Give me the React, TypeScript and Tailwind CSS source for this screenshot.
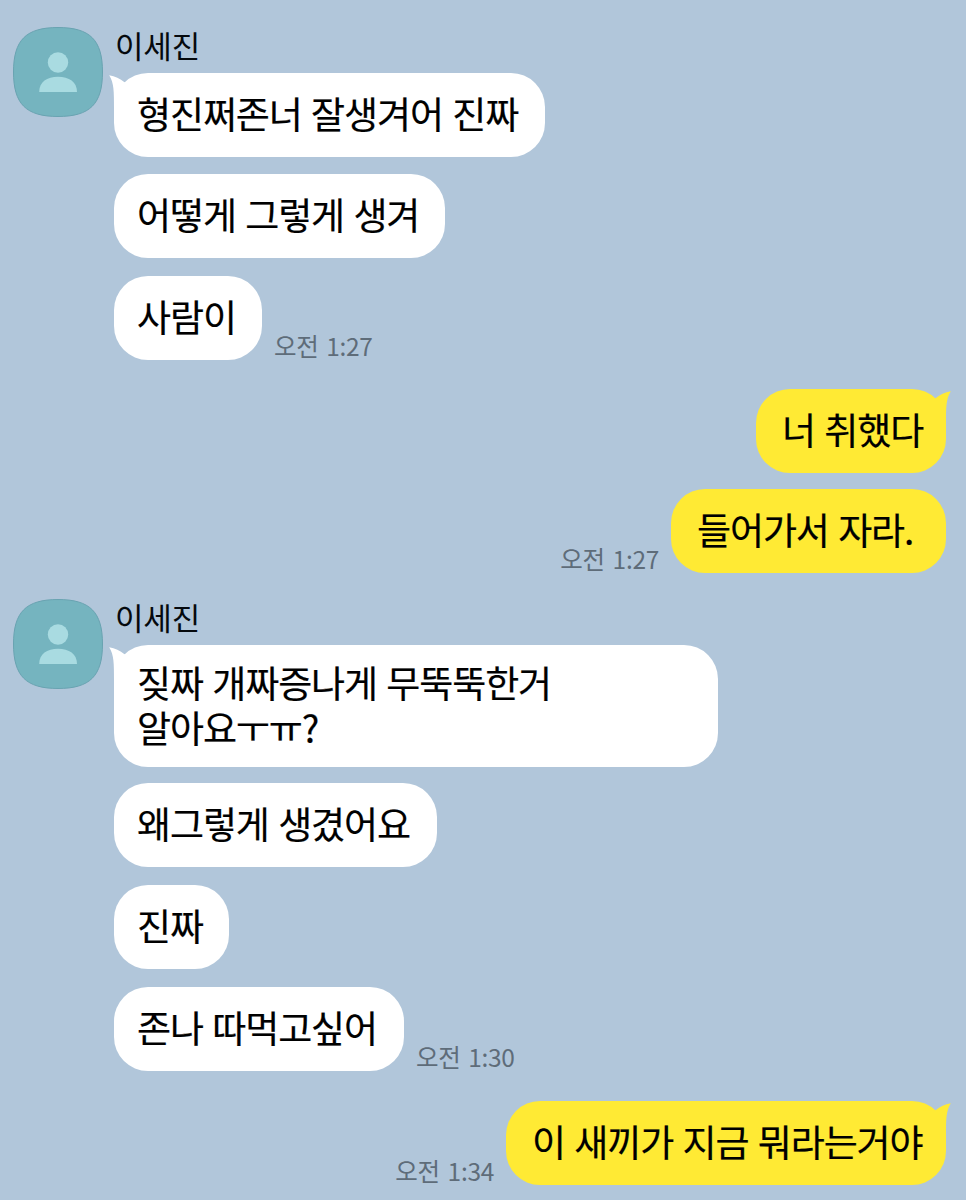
import React from "react";
import clsx from "clsx";

type Message = {
  text: string;
  size: string;
  time?: string;
};

type Group = {
  mine: boolean;
  spacing: string;
  messages: Message[];
};

const groups: Group[] = [
  {
    mine: false,
    spacing: "pt-[27px]",
    messages: [
      { text: "형진쩌존너 잘생겨어 진짜", size: "w-[431px] h-[84px]" },
      { text: "어떻게 그렇게 생겨", size: "mt-[17px] w-[331px] h-[84px]" },
      { text: "사람이", size: "mt-[18px] w-[148px] h-[84px]", time: "오전 1:27" },
    ],
  },
  {
    mine: true,
    spacing: "pt-[29px]",
    messages: [
      { text: "너 취했다", size: "w-[190px] h-[84px]" },
      { text: "들어가서 자라.", size: "mt-4 w-[275px] h-[84px]", time: "오전 1:27" },
    ],
  },
  {
    mine: false,
    spacing: "pt-[26px]",
    messages: [
      { text: "짖짜 개짜증나게 무뚝뚝한거\n알아요ㅜㅠ?", size: "w-[604px] h-[122px]" },
      { text: "왜그렇게 생겼어요", size: "mt-4 w-[323px] h-[84px]" },
      { text: "진짜", size: "mt-[18px] w-[115px] h-[84px]" },
      { text: "존나 따먹고싶어", size: "mt-[18px] w-[290px] h-[84px]", time: "오전 1:30" },
    ],
  },
  {
    mine: true,
    spacing: "pt-[30px]",
    messages: [
      { text: "이 새끼가 지금 뭐라는거야", size: "w-[440px] h-[84px]", time: "오전 1:34" },
    ],
  },
];

const Avatar = () => (
  <svg className="w-[90px] h-[90px] shrink-0" viewBox="0 0 90 90">
    <path
      d="M45 .5C77 .5 89.5 13 89.5 45S77 89.5 45 89.5 .5 77 .5 45 13 .5 45 .5Z"
      fill="#75b4bf"
      stroke="#69a3b1"
      strokeWidth="1"
    />
    <circle cx="45" cy="35.5" r="10.2" fill="#a9dbe1" />
    <path d="M26.2 65C26.2 55 34 49.8 45 49.8S64 55 64 65Z" fill="#a9dbe1" />
  </svg>
);

const Tail = ({ mine }: { mine: boolean }) => (
  <svg
    className={clsx(
      "absolute top-0 w-10 h-9",
      mine ? "right-[-5px] -scale-x-100" : "left-[-5px]"
    )}
    viewBox="0 0 40 36"
  >
    <path
      d="M.2 2.2C6 3 11 5.5 15.5 9.3L28 9V36H5C5 18 5 10 .2 2.2Z"
      fill={mine ? "#ffea34" : "#ffffff"}
    />
  </svg>
);

const Bubble = ({ message, mine, tail }: { message: Message; mine: boolean; tail: boolean }) => (
  <div className={clsx("flex items-end gap-3", mine && "flex-row-reverse")}>
    <div
      className={clsx(
        "relative flex flex-col justify-center rounded-[34px] pb-[3px] text-black",
        mine ? "bg-[#ffea34] pl-[26px]" : "bg-white pl-[23px]",
        message.size
      )}
    >
      {tail && <Tail mine={mine} />}
      <p className="relative text-[37px] leading-[45px] tracking-[-1.1px] [word-spacing:2.2px] [-webkit-text-stroke:0.2px_black] whitespace-pre">
        {message.text}
      </p>
    </div>
    {message.time && (
      <span className="text-[24.5px] leading-7 tracking-[-0.3px] [word-spacing:2.6px] text-[#5e6c79] whitespace-nowrap">
        {message.time}
      </span>
    )}
  </div>
);

export default function App() {
  return (
    <main className="w-[966px] h-[1200px] overflow-hidden bg-[#b1c6da] font-['Noto_Sans_CJK_KR',sans-serif]">
      {groups.map((group, index) => (
        <section
          key={index}
          className={clsx("flex", group.mine ? "justify-end pr-5" : "pl-[13px] gap-[11px]", group.spacing)}
        >
          {!group.mine && <Avatar />}
          <div className={clsx("flex flex-col", group.mine && "items-end")}>
            {!group.mine && (
              <h2 className="h-[46px] pl-px text-[31px] leading-[36px] tracking-[-0.2px] text-[#05090d]">이세진</h2>
            )}
            {group.messages.map((message, i) => (
              <Bubble key={message.text} message={message} mine={group.mine} tail={i === 0} />
            ))}
          </div>
        </section>
      ))}
    </main>
  );
}
